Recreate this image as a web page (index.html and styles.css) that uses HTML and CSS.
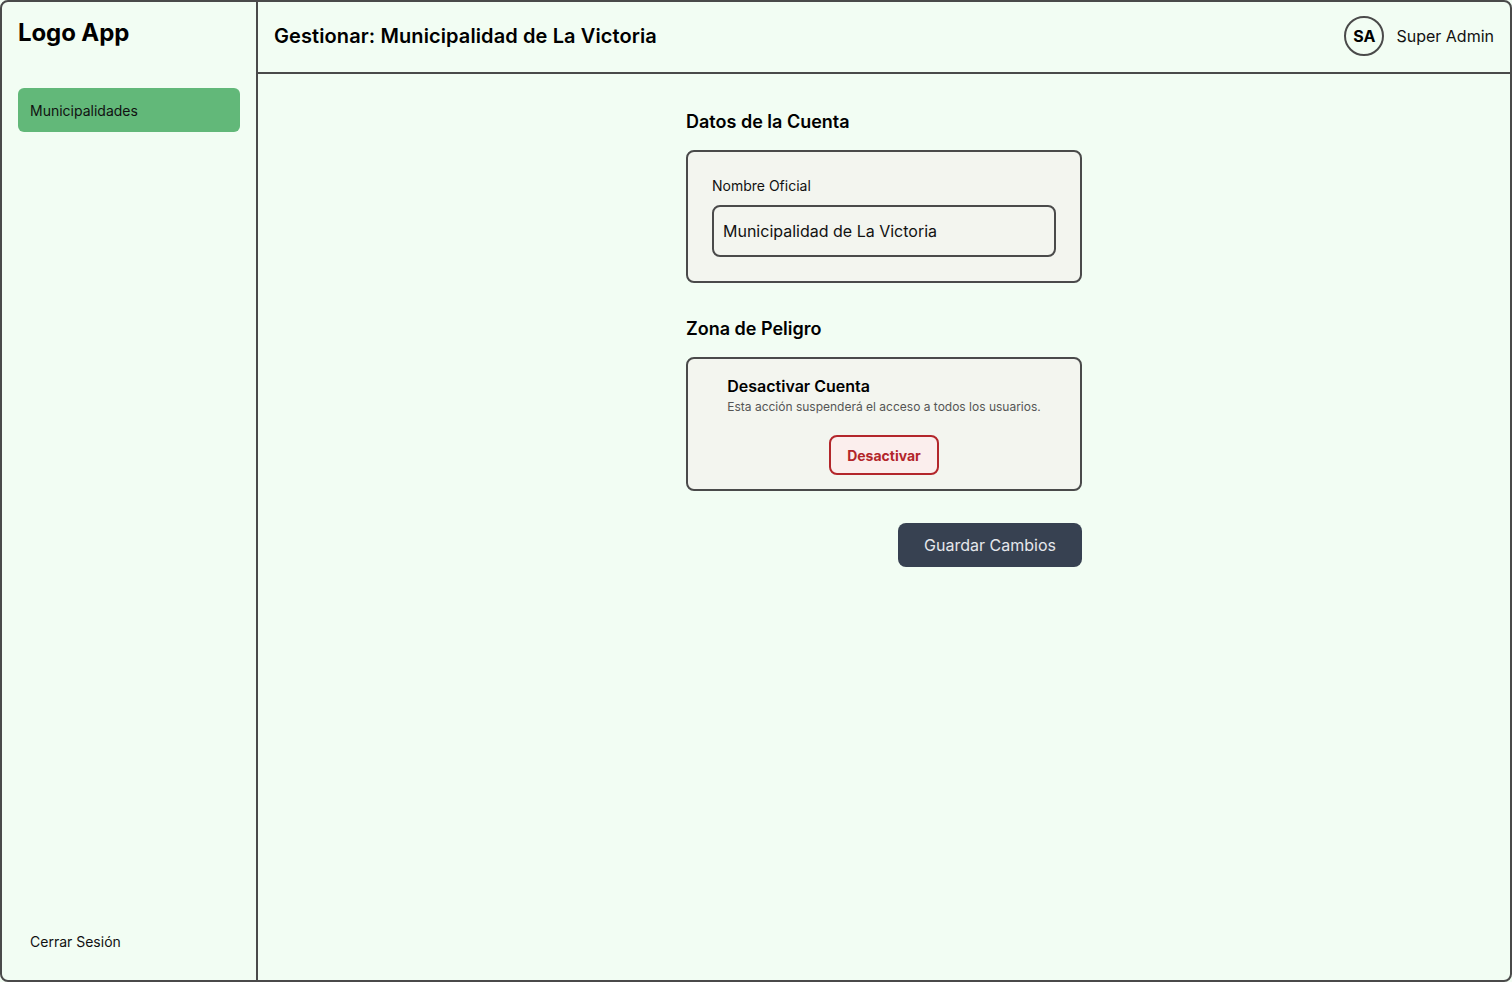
FILE: index.html
```html
<!DOCTYPE html>
<html lang="es">
<head>
<meta charset="utf-8">
<title>Gestionar</title>
<link rel="stylesheet" href="styles.css">
</head>
<body>
<div class="frame">
  <aside class="sidebar">
    <div class="logo">Logo App</div>
    <nav class="nav">
      <a class="nav-item active">Municipalidades</a>
    </nav>
    <div class="logout">Cerrar Sesión</div>
  </aside>
  <div class="main">
    <header class="header">
      <h1 class="title">Gestionar: Municipalidad de La Victoria</h1>
      <div class="user">
        <div class="avatar">SA</div>
        <span class="user-name">Super Admin</span>
      </div>
    </header>
    <section class="content">
      <div class="column">
        <h2 class="section-title">Datos de la Cuenta</h2>
        <div class="card card-form">
          <label class="label">Nombre Oficial</label>
          <div class="input">Municipalidad de La Victoria</div>
        </div>
        <h2 class="section-title danger-title">Zona de Peligro</h2>
        <div class="card card-danger">
          <div class="danger-text">
            <div class="danger-head">Desactivar Cuenta</div>
            <div class="danger-desc">Esta acción suspenderá el acceso a todos los usuarios.</div>
          </div>
          <button class="btn-danger">Desactivar</button>
        </div>
        <div class="actions">
          <button class="btn-primary">Guardar Cambios</button>
        </div>
      </div>
    </section>
  </div>
</div>
</body>
</html>
```
FILE: styles.css
```css
* { box-sizing: border-box; }
html, body { margin: 0; padding: 0; }
body {
  font-family: Inter, "Noto Sans", sans-serif;
  color: #111;
  background: #f2fdf3;
  width: 1512px;
  height: 982px;
  overflow: hidden;
}
.frame {
  width: 1512px;
  height: 982px;
  border: 2px solid #4a4a4a;
  border-radius: 8px;
  background: #f2fdf3;
  display: flex;
  overflow: hidden;
}
.sidebar {
  width: 256px;
  flex: none;
  border-right: 2px solid #4a4a4a;
  display: flex;
  flex-direction: column;
  padding: 16px 16px 28px 16px;
}
.logo {
  font-size: 24px;
  font-weight: 700;
  line-height: 30px;
  color: #000;
  letter-spacing: -0.1px;
}
.nav {
  margin-top: 40px;
  flex: 1;
}
.nav-item {
  display: flex;
  align-items: center;
  height: 44px;
  padding: 0 12px;
  border-radius: 6px;
  font-size: 14px;
  color: #111;
}
.nav-item.active { background: #62b879; }
.logout {
  font-size: 14px;
  padding-left: 12px;
  line-height: 20px;
  color: #111;
}
.main {
  flex: 1;
  display: flex;
  flex-direction: column;
}
.header {
  height: 72px;
  flex: none;
  border-bottom: 2px solid #4a4a4a;
  display: flex;
  align-items: center;
  justify-content: space-between;
  padding: 0 16px 2px 16px;
}
.title {
  margin: 0;
  font-size: 20px;
  font-weight: 600;
  color: #000;
  letter-spacing: 0.1px;
}
.user {
  display: flex;
  align-items: center;
  gap: 12px;
}
.avatar {
  width: 40px;
  height: 40px;
  border: 2px solid #4a4a4a;
  border-radius: 50%;
  display: flex;
  align-items: center;
  justify-content: center;
  font-weight: 700;
  font-size: 16px;
  color: #000;
}
.user-name { font-size: 16px; color: #111; }
.content {
  flex: 1;
  display: flex;
  justify-content: center;
  padding-top: 36px;
}
.column {
  width: 396px;
  display: flex;
  flex-direction: column;
}
.section-title {
  margin: 0 0 16px;
  font-size: 18px;
  font-weight: 600;
  line-height: 24px;
  color: #000;
}
.danger-title { margin-top: 34px; }
.card {
  border: 2px solid #4a4a4a;
  border-radius: 8px;
  background: #f3f5ef;
}
.card-form {
  padding: 25px 24px 24px;
  display: flex;
  flex-direction: column;
}
.label {
  font-size: 14px;
  line-height: 18px;
  color: #111;
  margin-bottom: 10px;
}
.input {
  height: 52px;
  border: 2px solid #4a4a4a;
  border-radius: 8px;
  display: flex;
  align-items: center;
  padding: 0 9px;
  font-size: 16px;
  color: #111;
}
.card-danger {
  padding: 16px 24px 14px;
  display: flex;
  flex-direction: column;
  align-items: center;
}
.danger-text { text-align: left; }
.danger-head {
  font-size: 16px;
  font-weight: 600;
  line-height: 22px;
  color: #000;
  margin-bottom: 2px;
}
.danger-desc {
  font-size: 12px;
  line-height: 16px;
  color: #555;
}
.btn-danger {
  margin-top: 20px;
  height: 40px;
  padding: 0 16px;
  border: 2px solid #b3262b;
  border-radius: 8px;
  background: #fbeeed;
  color: #b3262b;
  font-family: inherit;
  font-size: 14px;
  font-weight: 700;
}
.actions {
  margin-top: 32px;
  display: flex;
  justify-content: flex-end;
}
.btn-primary {
  height: 44px;
  width: 184px;
  border: none;
  border-radius: 8px;
  background: #374151;
  color: #e5e7eb;
  font-family: inherit;
  font-size: 16px;
}
```
